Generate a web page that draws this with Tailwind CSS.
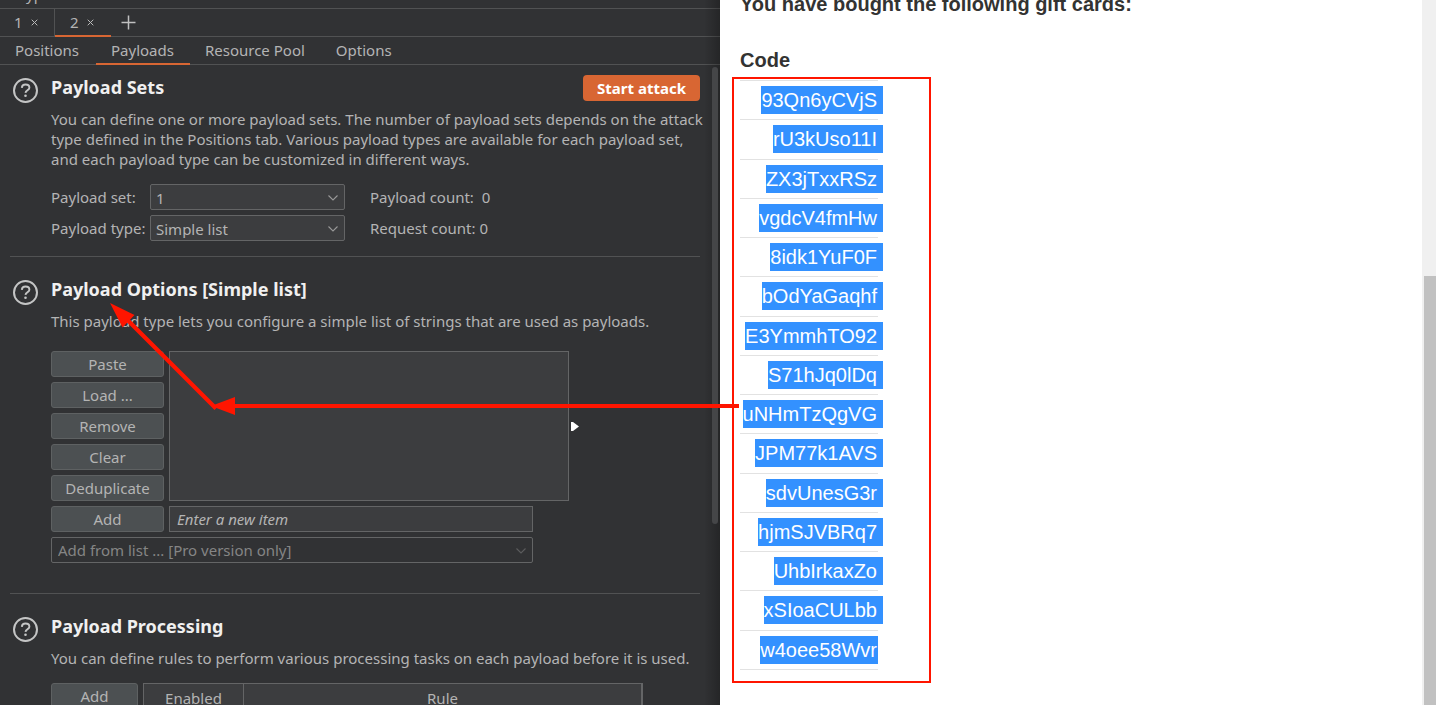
<!DOCTYPE html>
<html lang="en">
<head>
<meta charset="utf-8">
<title>Payloads</title>
<script src="https://cdn.jsdelivr.net/npm/@tailwindcss/browser@4"></script>
</head>
<body class="relative h-screen overflow-hidden bg-white">
<svg class="hidden" aria-hidden="true">
  <symbol id="help" viewBox="0 0 26 26"><circle cx="12.500" cy="13.500" r="11.500" fill="none" stroke="#c4c5c5" stroke-width="2"/><path d="M8.800 10.800c.2-2.100 1.800-3.300 3.700-3.300 2.200 0 3.900 1.300 3.900 3.200 0 2.500-3.700 2.600-3.900 5.100" fill="none" stroke="#c4c5c5" stroke-width="1.900"/><circle cx="12.500" cy="18.800" r="1.300" fill="#c4c5c5"/></symbol>
  <symbol id="chev" viewBox="0 0 12 8"><path d="M1.500 1.500 6 6l4.500-4.500" fill="none" stroke="currentColor" stroke-width="1.100"/></symbol>
  <symbol id="x" viewBox="0 0 7 7"><path d="M.7.7l5.600 5.600M6.300.7.7 6.300" stroke="#bbb" stroke-width="1"/></symbol>
</svg>
<div class="grid h-full grid-cols-[720fr_716fr]">
  <section class="relative h-full min-w-0 overflow-hidden bg-[#313234] font-['Noto_Sans',sans-serif] text-[15px] text-[#b4b4b4]">
    <div class="flex h-[9px] items-end border-b border-[#515253] pb-1 pl-[18px] leading-5"><span>Type</span></div>
    <nav class="flex h-7 items-stretch border-b border-[#515253]">
      <button class="flex w-[55px] items-center gap-2 border-r border-[#515253] pl-3.5">1 <svg class="size-[7px]"><use href="#x"/></svg></button>
      <button class="-mb-px flex w-14 items-center gap-2 border-b-2 border-[#d86633] pl-[15px]">2 <svg class="size-[7px]"><use href="#x"/></svg></button>
      <button class="ml-2.5" aria-label="New tab"><svg class="size-[15px]" viewBox="0 0 15 15"><path d="M7.500.5v14M.5 7.500h14" stroke="#c0c0c0" stroke-width="1.500"/></svg></button>
    </nav>
    <nav class="flex h-7 items-stretch border-b border-[#515253]">
      <a href="#" class="flex items-center px-[15px] pr-[17px]">Positions</a>
      <a href="#" class="-mb-px flex items-center border-b-2 border-[#d86633] pr-4 pl-[15px]">Payloads</a>
      <a href="#" class="flex items-center px-[15px]">Resource Pool</a>
      <a href="#" class="flex items-center px-4">Options</a>
    </nav>
    <div class="pr-5 pl-2.5">
      <div class="flex h-48 gap-3 border-b border-[#515253] pt-2.5 pl-[3px]">
        <svg class="mt-0.5 size-[26px] shrink-0"><use href="#help"/></svg>
        <div class="min-w-0 flex-1">
          <div class="flex justify-between"><h2 class="text-lg leading-6 font-bold text-[#f0f0f0]">Payload Sets</h2><button class="h-[26px] w-[117px] rounded-sm bg-[#d86633] font-bold text-white">Start attack</button></div>
          <p class="mt-2 leading-5 whitespace-nowrap">You can define one or more payload sets. The number of payload sets depends on the attack<br>type defined in the Positions tab. Various payload types are available for each payload set,<br>and each payload type can be customized in different ways.</p>
          <div class="mt-[15px] grid grid-cols-[99px_195px_1fr] gap-y-[5px] leading-[26px]">
            <label for="pset">Payload set:</label>
            <div class="relative"><select id="pset" class="block h-[26px] w-full appearance-none rounded-xs border border-[#646566] bg-[#3c3d3f] px-[5px] pb-0.5"><option>1</option></select><svg class="absolute top-2.5 right-1.5 h-2 w-3 text-[#999]"><use href="#chev"/></svg></div>
            <span class="pl-[25px]">Payload count: &nbsp;0</span>
            <label for="ptype">Payload type:</label>
            <div class="relative"><select id="ptype" class="block h-[26px] w-full appearance-none rounded-xs border border-[#646566] bg-[#3c3d3f] px-[5px] pb-0.5"><option>Simple list</option></select><svg class="absolute top-2.5 right-1.5 h-2 w-3 text-[#999]"><use href="#chev"/></svg></div>
            <span class="pl-[25px]">Request count: 0</span>
          </div>
        </div>
      </div>
      <div class="flex h-[337px] gap-3 border-b border-[#515253] pt-5 pl-[3px]">
        <svg class="mt-0.5 size-[26px] shrink-0"><use href="#help"/></svg>
        <div class="min-w-0 flex-1">
          <h2 class="text-lg leading-6 font-bold text-[#f0f0f0]">Payload Options [Simple list]</h2>
          <p class="mt-2.5 leading-5">This payload type lets you configure a simple list of strings that are used as payloads.</p>
          <div class="mt-5 flex gap-[5px]">
            <div class="flex w-[113px] flex-col gap-[5px]">
              <button class="h-[26px] rounded-[3px] border border-[#5e6162] bg-[#4c5052]">Paste</button>
              <button class="h-[26px] rounded-[3px] border border-[#5e6162] bg-[#4c5052]">Load ...</button>
              <button class="h-[26px] rounded-[3px] border border-[#5e6162] bg-[#4c5052]">Remove</button>
              <button class="h-[26px] rounded-[3px] border border-[#5e6162] bg-[#4c5052]">Clear</button>
              <button class="h-[26px] rounded-[3px] border border-[#5e6162] bg-[#4c5052]">Deduplicate</button>
            </div>
            <div class="w-[400px] border border-[#646566] bg-[#3c3d3f]"></div>
          </div>
          <div class="mt-[5px] flex w-[482px] gap-[5px]">
            <button class="h-[26px] w-[113px] rounded-[3px] border border-[#5e6162] bg-[#4c5052]">Add</button>
            <input aria-label="New item" placeholder="Enter a new item" class="h-[26px] min-w-0 flex-1 border border-[#646566] bg-[#3c3d3f] px-[7px] italic placeholder:text-[#b4b4b4]">
          </div>
          <div class="relative mt-[5px] w-[482px]"><select aria-label="Add from list" class="block h-[26px] w-full appearance-none rounded-xs border border-[#646566] bg-[#313234] px-1.5 text-[#858585]"><option>Add from list ... [Pro version only]</option></select><svg class="absolute top-2.5 right-1.5 h-2 w-3 text-[#5c5d5e]"><use href="#chev"/></svg></div>
        </div>
      </div>
      <div class="flex gap-3 pt-5 pl-[3px]">
        <svg class="mt-0.5 size-[26px] shrink-0"><use href="#help"/></svg>
        <div class="min-w-0 flex-1">
          <h2 class="text-lg leading-6 font-bold text-[#f0f0f0]">Payload Processing</h2>
          <p class="mt-2.5 leading-5">You can define rules to perform various processing tasks on each payload before it is used.</p>
          <div class="mt-[15px] flex items-start gap-[5px]">
            <button class="h-[26px] w-[87px] rounded-[3px] border border-[#5e6162] bg-[#4c5052]">Add</button>
            <table class="h-[30px] w-[500px] table-fixed border-collapse border border-[#646566] bg-[#3c3d3f]"><thead><tr><th class="w-[100px] border border-[#646566] font-normal">Enabled</th><th class="border-r-2 border-[#646566] font-normal">Rule</th></tr></thead></table>
          </div>
        </div>
      </div>
    </div>
    <div class="pointer-events-none absolute inset-y-0 right-0 w-4 bg-linear-to-r from-transparent to-black/25"></div>
    <div class="absolute top-[67px] right-0.5 h-[457px] w-1.5 rounded-full bg-[#454648]"></div>
  </section>
  <main class="flex h-full min-w-0 justify-between overflow-hidden font-['Liberation_Sans',sans-serif] text-xl text-[#333332]">
    <div class="pl-5">
      <h3 class="-mt-2 h-14 leading-6 font-bold">You have bought the following gift cards:</h3>
      <table class="h-[622px] w-[138px] border-collapse">
        <thead><tr><th class="h-8 pb-2 text-left leading-6">Code</th></tr></thead>
        <tbody id="codes" class="text-right text-white"></tbody>
      </table>
    </div>
    <div class="h-full w-3.5 bg-[#f0f0f0] pt-[276px] pl-0.5"><div class="h-full bg-[#c1c1c1]"></div></div>
  </main>
</div>
<svg class="pointer-events-none absolute top-0 left-0 h-[705px] w-[1436px]" viewBox="0 0 1436 705" aria-hidden="true">
  <rect x="733" y="78" width="197" height="604" fill="none" stroke="#ff1500" stroke-width="2"/>
  <path d="M739 406H233M216 408.500 126 318.500" fill="none" stroke="#ff1500" stroke-width="4.200"/>
  <path d="M211 406 235 397v18zM110 303 134.500 315 122.500 327.500z" fill="#ff1500"/>
  <path d="M571 422h2l6 4.500-6 4.500h-2z" fill="#fff"/>
</svg>
<script>
  const codes = ["93Qn6yCVjS","rU3kUso11I","ZX3jTxxRSz","vgdcV4fmHw","8idk1YuF0F","bOdYaGaqhf","E3YmmhTO92","S71hJq0lDq","uNHmTzQgVG","JPM77k1AVS","sdvUnesG3r","hjmSJVBRq7","UhbIrkaxZo","xSIoaCULbb","w4oee58Wvr"];
  document.getElementById("codes").innerHTML = codes.map((c, i) =>
    `<tr class="border-y border-[#e2e2e2]"><td class="p-0 pt-[5px] align-top leading-7"><span class="${i < codes.length - 1 ? "-mr-[5px] inline-block h-7 bg-[#3391ff] pr-1.5 align-top" : "inline-block h-7 bg-[#3391ff] pr-px align-top"}">${c}</span></td></tr>`).join("");
</script>
</body>
</html>
